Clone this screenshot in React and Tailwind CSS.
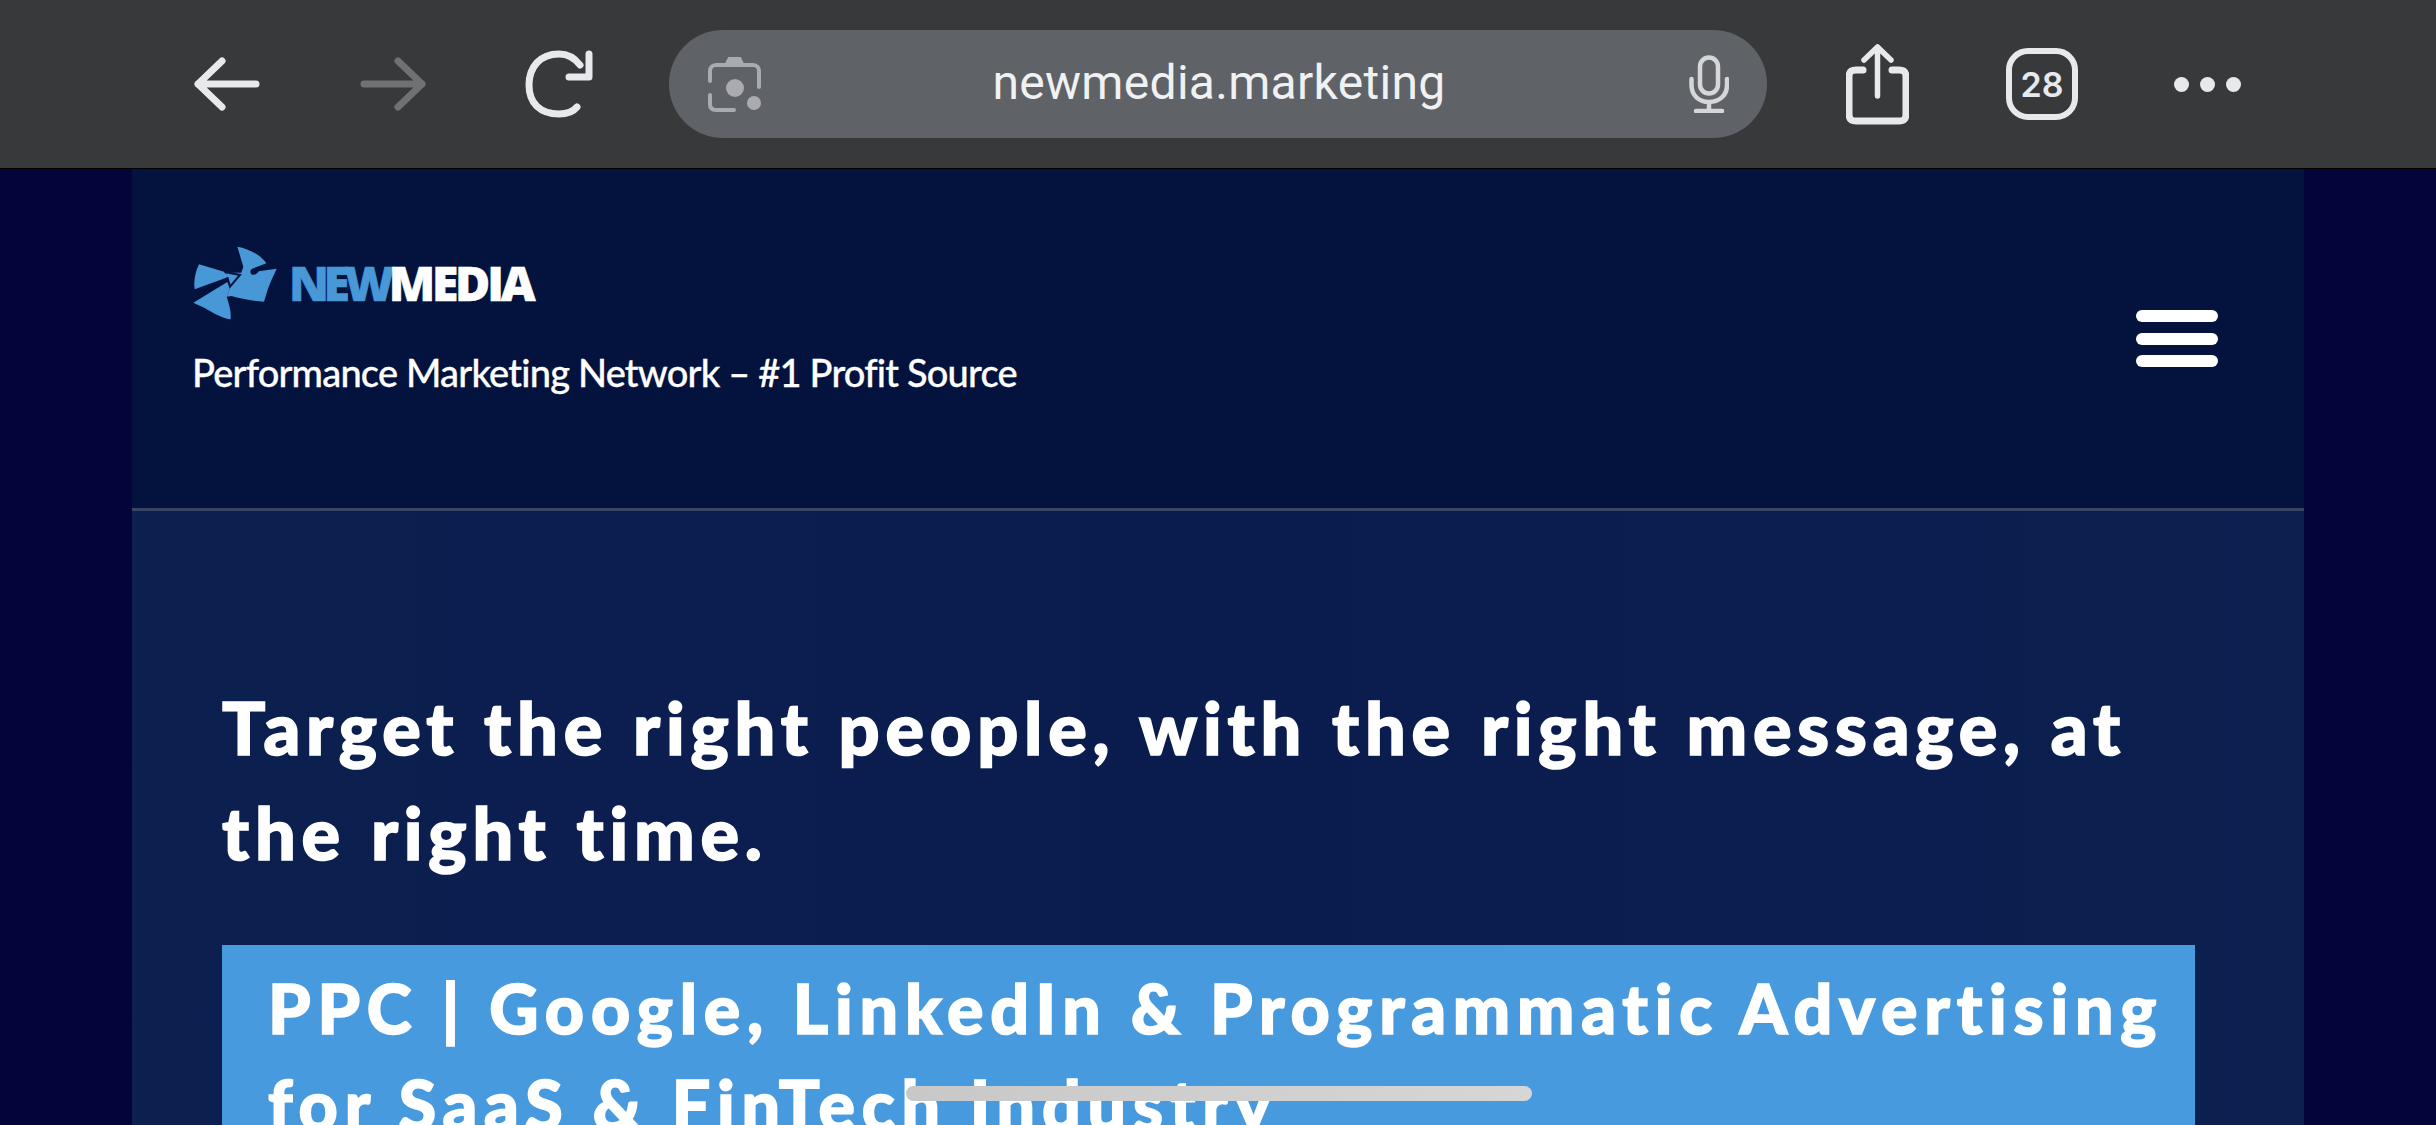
const futura = "font-['Lato','Liberation_Sans',sans-serif]";

function BackIcon({ className }) {
  return (
    <svg viewBox="0 0 66 54" className={className} fill="none" stroke="currentColor" strokeWidth="7" strokeLinecap="round" strokeLinejoin="round">
      <path d="M28 4 4 27l24 23M4 27h58" />
    </svg>
  );
}

function ForwardIcon({ className }) {
  return (
    <svg viewBox="0 0 66 54" className={className} fill="none" stroke="currentColor" strokeWidth="7" strokeLinecap="round" strokeLinejoin="round">
      <path d="M38 4l24 23-24 23M62 27H4" />
    </svg>
  );
}

function ReloadIcon({ className }) {
  return (
    <svg viewBox="0 0 68 68" className={className} fill="none" stroke="currentColor" strokeWidth="7" strokeLinecap="round" strokeLinejoin="round">
      <path d="M55 15C49 7 42 4 34 4 15 4 4 17 4 35s11 29 30 29c7 0 14-2 18-7" />
      <path d="M64 4v23H44" />
    </svg>
  );
}

function LensIcon({ className }) {
  return (
    <svg viewBox="0 0 53 55" className={className} fill="none" stroke="currentColor" strokeWidth="4" strokeLinecap="round">
      <path d="M2 24V14c0-3 2-6 6-6h37c4 0 6 3 6 6v16" />
      <path d="M2 38v9c0 4 2 6 6 6h18" />
      <path d="M19 7l3-6h9l3 6z" fill="currentColor" />
      <circle cx="27" cy="31" r="9" fill="currentColor" stroke="none" />
      <circle cx="46" cy="46" r="7" fill="currentColor" stroke="none" />
    </svg>
  );
}

function MicIcon({ className }) {
  return (
    <svg viewBox="0 0 40 58" className={className} fill="none" stroke="currentColor" strokeWidth="4.5" strokeLinecap="round">
      <rect x="11" y="2.5" width="18" height="36" rx="9" />
      <path d="M2.5 24v6c0 11 8 17 17.500 17s18-6 18-17v-6M20 47v9M7 56h26" />
    </svg>
  );
}

function ShareIcon({ className }) {
  return (
    <svg viewBox="0 0 63 81" className={className} fill="none" stroke="currentColor" strokeWidth="7" strokeLinecap="round" strokeLinejoin="round">
      <path d="M17 26H10c-5 0-7 2-7 7v37c0 5 2 7 7 7h43c5 0 7-2 7-7V33c0-5-2-7-7-7h-7" />
      <path d="M31.500 52V3M18 16 31.500 3 45 16" strokeWidth="5.5" />
    </svg>
  );
}

function LogoMark({ className }) {
  return (
    <svg viewBox="28 20 250 222" className={className} fill="#4898d8">
      <path d="M160 22C195 28 232 48 247 72L205 88C197 92 197 103 205 106 215 108 222 100 224 96L278 88C268 110 258 130 252 148L240 187C205 185 170 178 142 170L128 172 138 146 130 112 126 100 172 100 178 82Z" />
      <path d="M45 75 120 97 135 112 32 150C28 125 35 95 45 75Z" />
      <path d="M130 128 28 190C45 198 62 204 72 212 95 225 120 238 140 240 142 215 135 195 128 172L138 146Z" />
      <path d="M122 98 168 107 138 142 130 114" fill="none" stroke="#03133e" strokeWidth="6" />
    </svg>
  );
}

export default function App() {
  return (
    <div className="relative flex h-[1125px] w-full flex-col overflow-hidden bg-[#03053a]">
      {/* browser bar */}
      <div className="flex h-[169px] shrink-0 items-center border-b border-black bg-[#38393b] pl-[194px] text-[#e8e9ec]">
        <BackIcon className="h-[54px] w-[66px]" />
        <ForwardIcon className="ml-[100px] h-[54px] w-[66px] text-[#707173]" />
        <ReloadIcon className="ml-[99px] h-[68px] w-[68px]" />
        <div className="ml-[76px] flex h-[108px] w-[1098px] items-center rounded-full bg-[#5f6267] pl-[39px] pr-[38px]">
          <LensIcon className="h-[55px] w-[53px] text-[#a9abb0]" />
          <span className="mb-[3px] mr-[12px] flex-1 text-center font-['Roboto',sans-serif] text-[48px] tracking-[0.3px] text-[#f0f1f3]">newmedia.marketing</span>
          <MicIcon className="h-[58px] w-[40px] text-[#d5d6d9]" />
        </div>
        <ShareIcon className="ml-[79px] h-[81px] w-[63px]" />
        <div className="ml-[97px] flex h-[72px] w-[72px] items-center justify-center rounded-[22px] border-[6px] border-[#e8e9ec] font-['Inter',sans-serif] text-[34px] font-semibold">28</div>
        <div className="ml-[96px] flex gap-[11px]">
          <span className="h-[15px] w-[15px] rounded-full bg-[#e8e9ec]" />
          <span className="h-[15px] w-[15px] rounded-full bg-[#e8e9ec]" />
          <span className="h-[15px] w-[15px] rounded-full bg-[#e8e9ec]" />
        </div>
      </div>

      <div className="flex min-h-0 flex-1 flex-col px-[132px]">
        {/* site header */}
        <div className="flex h-[342px] shrink-0 items-start justify-between border-b-[3px] border-[#3a4566] bg-[#03133e] pl-[61px] pr-[86px]">
          <div>
            <div className="mt-[77px] flex h-[74px] items-center">
              <LogoMark className="h-[74px] w-[84px]" />
              <span className="ml-[12px] font-['Open_Sans',sans-serif] text-[48px] font-extrabold leading-none [-webkit-text-stroke:0.6px_currentColor]">
                <span className="tracking-[-5.5px] text-[#4898d8]">NEW</span>
                <span className="tracking-[-3.2px] text-white">MEDIA</span>
              </span>
            </div>
            <p className={`${futura} -ml-[1px] mt-[27px] text-[38px] font-medium leading-[50px] tracking-[-0.8px] text-white [-webkit-text-stroke:0.3px_white]`}>Performance Marketing Network – #1 Profit Source</p>
          </div>
          <div className="mt-[141px] flex w-[82px] flex-col gap-[10.5px]">
            <span className="h-[12px] rounded-full bg-white" />
            <span className="h-[12px] rounded-full bg-white" />
            <span className="h-[12px] rounded-full bg-white" />
          </div>
        </div>

        {/* hero */}
        <div className="flex-1 bg-gradient-to-r from-[#0c2050] via-[#0a1c4e] to-[#0c2050] pl-[90px] pr-[109px] pt-[164px]">
          <h1 className={`${futura} text-[72px] font-black leading-[105px] tracking-[5.8px] text-white [-webkit-text-stroke:1.6px_white] [word-spacing:2px]`}>
            Target the right people, with the right message, at the right time.
          </h1>
          <div className="mt-[60px] h-[400px] bg-[#489ade] pl-[46px] pr-[30px] pt-[15px]">
            <h2 className={`${futura} text-[68px] font-black leading-[96px] tracking-[6.8px] text-white [-webkit-text-stroke:1.6px_white]`}>
              PPC | Google, LinkedIn &amp; Programmatic Advertising for SaaS &amp; FinTech Industry
            </h2>
          </div>
        </div>
      </div>

      {/* home indicator */}
      <div className="absolute left-[906px] top-[1086px] h-[15px] w-[626px] rounded-full bg-gradient-to-r from-[#c8c8c8] to-[#d6d6d6]" />
    </div>
  );
}
